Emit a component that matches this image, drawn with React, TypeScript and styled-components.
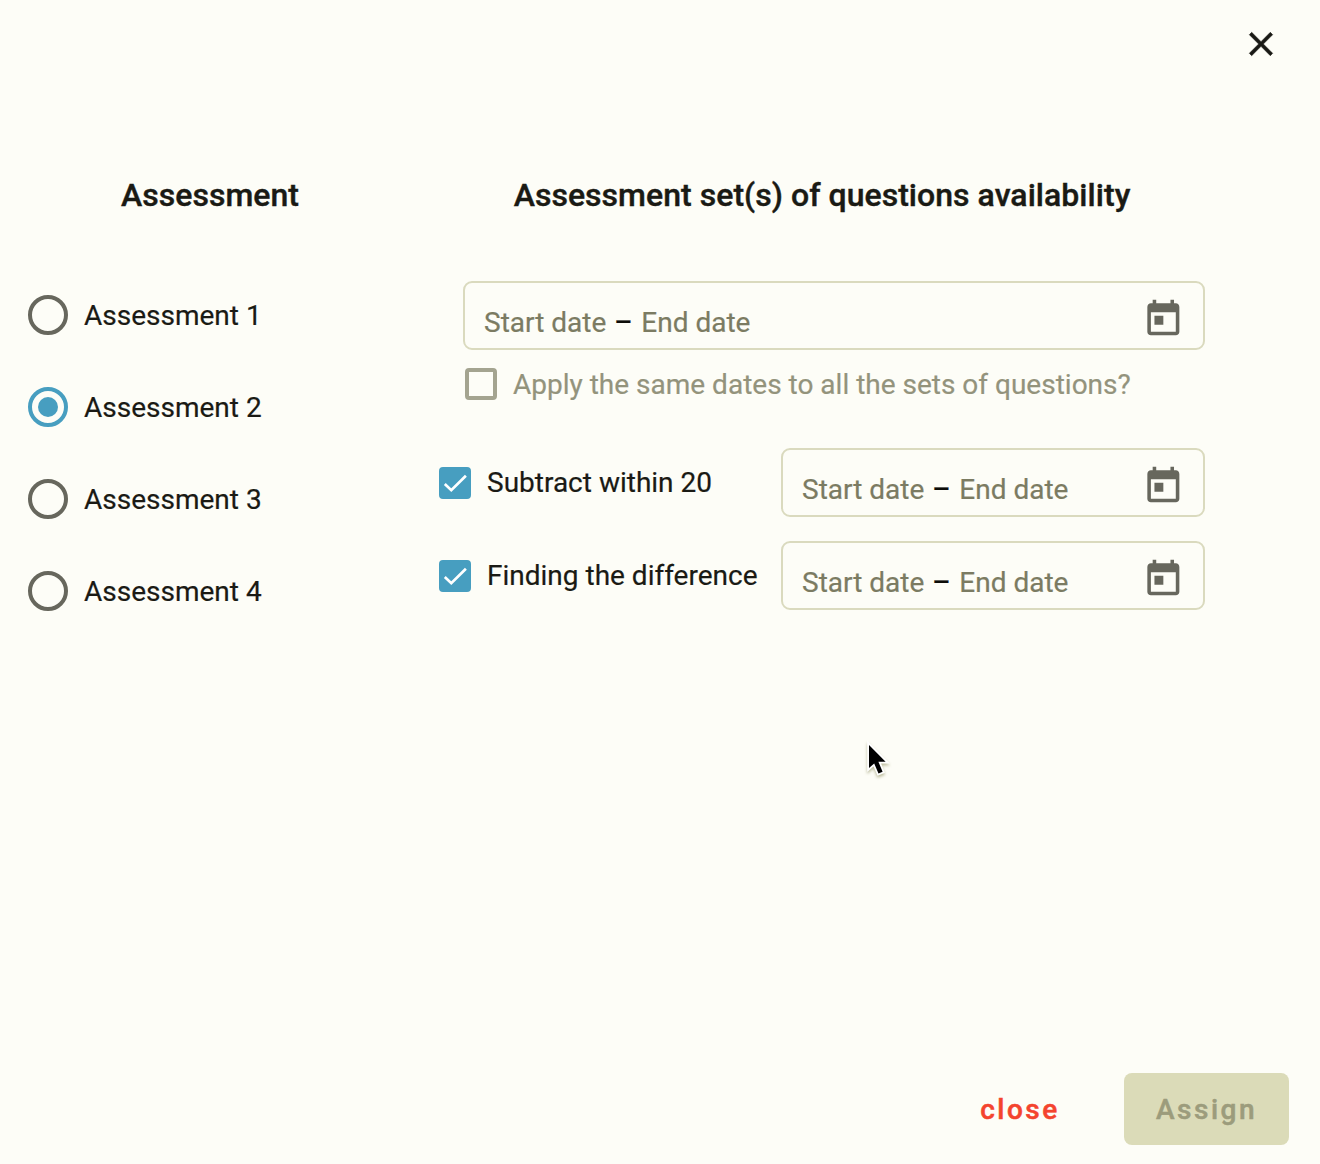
import React, { useState } from 'react';
import styled, { createGlobalStyle } from 'styled-components';

const GlobalStyle = createGlobalStyle`
  body { margin: 0; background: #fdfdf7; }
  *, *::before, *::after { box-sizing: border-box; }
`;

const Dialog = styled.main`
  display: flex;
  flex-direction: column;
  width: 1320px;
  height: 1164px;
  overflow: hidden;
  background: #fdfdf7;
  color: #1a1a14;
  font-family: Roboto, "Liberation Sans", sans-serif;
  font-size: 28px;
  line-height: 40px;
`;

const Header = styled.header`
  display: flex;
  justify-content: flex-end;
  height: 173px;
  padding: 24px 39px 0 0;
`;

const IconButton = styled.button`
  display: flex;
  width: 40px;
  height: 40px;
  padding: 0;
  border: 0;
  background: none;
  color: #191915;
`;

const Content = styled.div`
  display: grid;
  grid-template-columns: 420px 766px;
  column-gap: 19px;
  flex: 1;
`;

const Column = styled.section`
  display: flex;
  flex-direction: column;
`;

const Title = styled.h2`
  margin: 0;
  height: 44px;
  font-size: 32px;
  font-weight: 500;
  line-height: 44px;
  letter-spacing: 0.04px;
  text-align: center;
  white-space: nowrap;
  -webkit-text-stroke: 0.4px currentColor;
`;

const RadioList = styled.div`
  display: flex;
  flex-direction: column;
  gap: 52px;
  padding: 78px 0 0 28px;
`;

const RadioRow = styled.label`
  display: flex;
  align-items: center;
  gap: 16px;
  height: 40px;
`;

const HiddenInput = styled.input`
  position: absolute;
  opacity: 0;
  pointer-events: none;
`;

const Ring = styled.span<{ $on: boolean }>`
  display: grid;
  place-items: center;
  width: 40px;
  height: 40px;
  border: 4px solid ${(p) => (p.$on ? '#479ec0' : '#67675d')};
  border-radius: 50%;

  &::after {
    content: '';
    width: 20px;
    height: 20px;
    border-radius: 50%;
    background: ${(p) => (p.$on ? '#479ec0' : 'transparent')};
  }
`;

const Label = styled.span<{ $drop?: number; $muted?: boolean }>`
  padding-top: ${(p) => p.$drop ?? 0}px;
  color: ${(p) => (p.$muted ? '#93937c' : 'inherit')};
  white-space: nowrap;
  -webkit-text-stroke: 0.2px currentColor;
`;

const AllDates = styled.div`
  display: flex;
  flex-direction: column;
  gap: 18px;
  padding: 64px 0 0 24px;
`;

const Field = styled.div`
  display: flex;
  align-items: center;
  justify-content: space-between;
  height: 69px;
  padding: 0 18px 0 19px;
  border: 2px solid #dadabe;
  border-radius: 9px;
`;

const Range = styled.span`
  display: flex;
  padding-top: 14px;
  color: #7b7b62;
  white-space: nowrap;
  -webkit-text-stroke: 0.2px currentColor;
`;

const Dash = styled.span`
  margin: 0 9px 0 8px;
  color: #0c0c08;
  font-weight: 500;
`;

const CalendarSlot = styled.span`
  display: flex;
  padding-top: 7px;
`;

const CheckRow = styled.label<{ $inset?: number }>`
  display: flex;
  align-items: center;
  gap: 16px;
  height: 32px;
  padding-left: ${(p) => p.$inset ?? 0}px;
`;

const Box = styled.span<{ $on: boolean }>`
  display: block;
  flex: none;
  width: 32px;
  height: 32px;
  border: 4px solid ${(p) => (p.$on ? '#479ec0' : '#a4a490')};
  border-radius: 4px;
  background: ${(p) => (p.$on ? '#479ec0' : 'transparent')};
`;

const Tick = styled.svg`
  display: block;
  width: 24px;
  height: 24px;
`;

const SetList = styled.div`
  display: flex;
  flex-direction: column;
  gap: 24px;
  padding-top: 48px;
`;

const SetRow = styled.div`
  display: grid;
  grid-template-columns: 342px 424px;
  align-items: center;
`;

const Footer = styled.footer`
  display: flex;
  align-items: center;
  justify-content: flex-end;
  gap: 32px;
  height: 91px;
  padding: 0 31px 19px 0;
`;

const Action = styled.button<{ $kind: 'text' | 'filled' }>`
  width: ${(p) => (p.$kind === 'filled' ? 165 : 144)}px;
  height: 72px;
  padding: 2px 0 0;
  border: 0;
  border-radius: 8px;
  background: ${(p) => (p.$kind === 'filled' ? '#dbdbb8' : 'transparent')};
  color: ${(p) => (p.$kind === 'filled' ? '#9c9c7c' : '#f4442e')};
  font: 500 28px/40px Roboto, "Liberation Sans", sans-serif;
  letter-spacing: 2.5px;
  -webkit-text-stroke: 0.5px currentColor;
`;

const Pointer = styled.svg`
  position: absolute;
  left: 862px;
  top: 738px;
  pointer-events: none;
  filter: drop-shadow(0 2px 1.5px rgba(90, 90, 20, 0.4));
`;

const CalendarIcon = () => (
  <svg width="42.7" height="42.7" viewBox="0 0 24 24" fill="#67675d">
    <path d="M19 3h-1V1h-2v2H8V1H6v2H5c-1.11 0-1.99.9-1.99 2L3 19c0 1.1.89 2 2 2h14c1.1 0 2-.9 2-2V5c0-1.1-.9-2-2-2zm0 16H5V8h14v11zM7 10h5v5H7z" />
  </svg>
);

const DateRange = () => (
  <Field>
    <Range>
      <span>Start date</span>
      <Dash>–</Dash>
      <span>End date</span>
    </Range>
    <CalendarSlot>
      <CalendarIcon />
    </CalendarSlot>
  </Field>
);

type CheckProps = { label: string; on: boolean; muted?: boolean; inset?: number; drop?: number; onToggle?: () => void };

const Check = ({ label, on, muted, inset, drop, onToggle }: CheckProps) => (
  <CheckRow $inset={inset}>
    <HiddenInput type="checkbox" checked={on} disabled={muted} onChange={() => onToggle?.()} />
    <Box $on={on}>
      {on && (
        <Tick viewBox="0 0 24 24" fill="none" stroke="#fff" strokeWidth="2.7">
          <path d="M1.8 13 8.3 19.2 22.9 4.8" />
        </Tick>
      )}
    </Box>
    <Label $muted={muted} $drop={drop}>{label}</Label>
  </CheckRow>
);

const assessments = ['Assessment 1', 'Assessment 2', 'Assessment 3', 'Assessment 4'];
const questionSets = ['Subtract within 20', 'Finding the difference'];

export default function App() {
  const [selected, setSelected] = useState(1);
  const [enabled, setEnabled] = useState([true, true]);

  return (
    <Dialog>
      <GlobalStyle />
      <Header>
        <IconButton aria-label="Close dialog">
          <svg width="40" height="40" viewBox="0 0 24 24" fill="currentColor" stroke="currentColor" strokeWidth="0.35">
            <path d="M19 6.41 17.59 5 12 10.59 6.41 5 5 6.41 10.59 12 5 17.59 6.41 19 12 13.41 17.59 19 19 17.59 13.41 12z" />
          </svg>
        </IconButton>
      </Header>
      <Content>
        <Column>
          <Title>Assessment</Title>
          <RadioList>
            {assessments.map((name, i) => (
              <RadioRow key={name}>
                <HiddenInput type="radio" name="assessment" checked={selected === i} onChange={() => setSelected(i)} />
                <Ring $on={selected === i} />
                <Label $drop={2}>{name}</Label>
              </RadioRow>
            ))}
          </RadioList>
        </Column>
        <Column>
          <Title>Assessment set(s) of questions availability</Title>
          <AllDates>
            <DateRange />
            <Check label="Apply the same dates to all the sets of questions?" on={false} muted inset={2} drop={2} />
          </AllDates>
          <SetList>
            {questionSets.map((name, i) => (
              <SetRow key={name}>
                <Check
                  label={name}
                  on={enabled[i]}
                  onToggle={() => setEnabled(enabled.map((v, n) => (n === i ? !v : v)))}
                />
                <DateRange />
              </SetRow>
            ))}
          </SetList>
        </Column>
      </Content>
      <Footer>
        <Action $kind="text">close</Action>
        <Action $kind="filled" disabled>Assign</Action>
      </Footer>
      <Pointer width="30" height="42" viewBox="0 0 30 42">
        <path
          d="M7 7V30L12.2 25.4 16.5 35.5 20.6 33.8 16.4 23.8H23.6Z"
          fill="#000"
          stroke="#fff"
          strokeWidth="3.6"
          paintOrder="stroke"
        />
      </Pointer>
    </Dialog>
  );
}
